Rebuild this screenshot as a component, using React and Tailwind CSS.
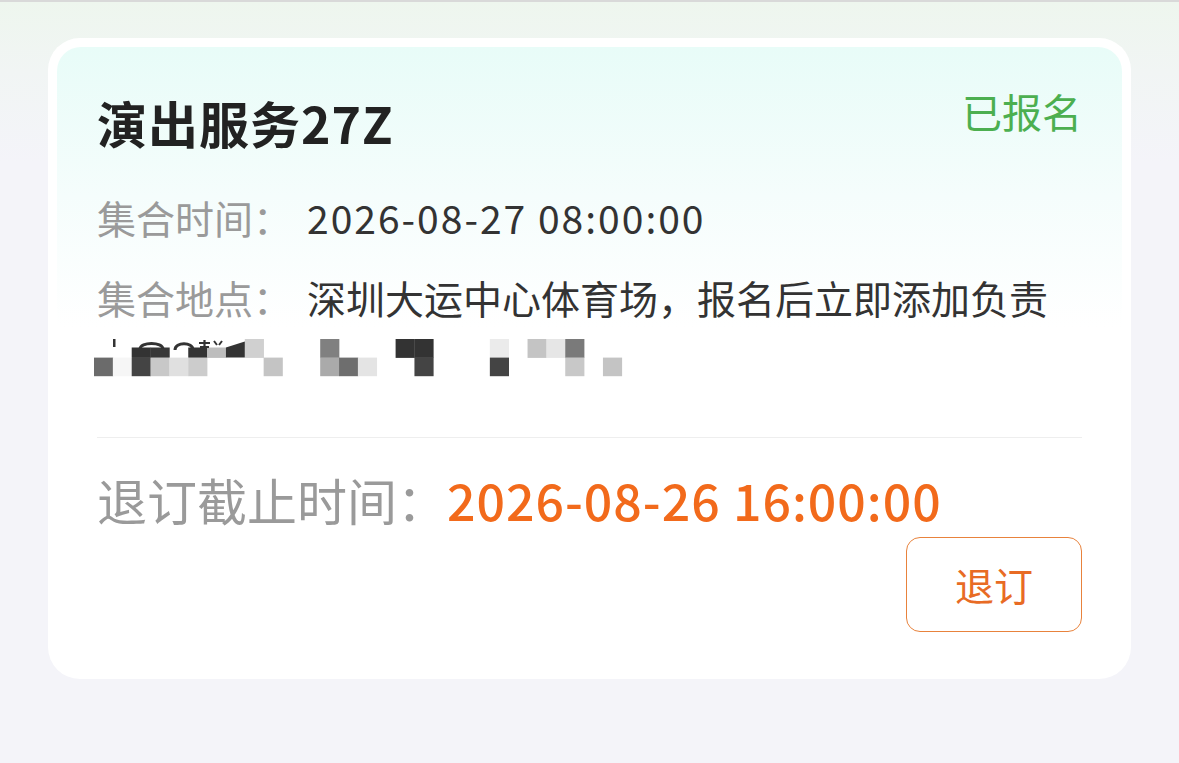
const W = 18.85;
const H = 18.6;

const row1 = [
  [2, "#333333", 8.5],
  [3, "#383838", 8.5],
  [5, "#333333", 8.5],
  [6, "#bdbdbd", 8.5],
  [8, "#d0d0d0", 0],
  [12, "#808080", 0],
  [16, "#333333", 0],
  [17, "#333333", 0],
  [21, "#ebebeb", 0],
  [23, "#c4c4c4", 0],
  [24, "#e6e6e6", 0],
  [25, "#7a7a7a", 0],
];

const row2 = [
  [0, "#6b6b6b"],
  [1, "#f6f6f6"],
  [2, "#444444"],
  [3, "#c8c8c8"],
  [4, "#e0e0e0"],
  [5, "#cccccc"],
  [9, "#c4c4c4"],
  [12, "#aaaaaa"],
  [13, "#6e6e6e"],
  [14, "#e4e4e4"],
  [17, "#444444"],
  [21, "#444444"],
  [25, "#c8c8c8"],
  [27, "#c4c4c4"],
];

function Mosaic() {
  return (
    <svg width="540" height="38" viewBox="0 0 540 38" className="block">
      {row1.map(([n, c, y0]) => (
        <rect key={"a" + n} x={n * W} y={y0} width={W + 0.3} height={H - y0 + 0.3} fill={c} />
      ))}
      <polygon points={`${7 * W},8.5 ${8 * W},2.5 ${8 * W},${H} ${7 * W},${H}`} fill="#333333" />
      {row2.map(([n, c]) => (
        <rect key={"b" + n} x={n * W} y={H} width={W + 0.3} height={H} fill={c} />
      ))}
      <rect x="19" y="0" width="2.5" height="8" fill="#333333" />
      <path d="M46 10 C46 2.5 69 2.5 69 10" stroke="#333333" strokeWidth="3" fill="none" />
      <path d="M81 11 C81 2.5 99 2.5 99 11" stroke="#333333" strokeWidth="3" fill="none" />
      <path d="M105 4 H116 M110.5 1 V9 M106 8 H115" stroke="#333333" strokeWidth="2.2" fill="none" />
      <path d="M120 2 L123 6 M128 2 L125 6" stroke="#333333" strokeWidth="2" fill="none" />
    </svg>
  );
}

export default function App() {
  return (
    <div
      className="min-h-[763px] w-full border-t-2 border-[#d9d9d9] bg-[linear-gradient(180deg,#eef6ee_0px,#f1f5f4_70px,#f4f4f9_160px)] px-[48px] pt-[36px]"
      style={{ fontFamily: '"Noto Sans CJK SC", "Noto Sans", sans-serif' }}
    >
      <div className="rounded-[32px] bg-white p-[9px]">
        <div className="rounded-[24px] bg-[linear-gradient(180deg,#e8fcf8_0%,#f5fdfc_24%,#ffffff_45%)] px-[40px] pb-[38px] pt-[40px]">
          <div className="flex h-[70px] items-start justify-between">
            <div className="text-[50px] font-bold leading-[70px] tracking-[1px] text-[#222222]">演出服务27Z</div>
            <div className="text-[40px] leading-[48px] text-[#4caf50]">已报名</div>
          </div>

          <div className="mt-[31px] text-[39px] leading-[58px]">
            <span className="inline-block w-[210px] text-[#9a9a9a]">集合时间：</span>
            <span className="tracking-[2px] text-[#333333]">2026-08-27 08:00:00</span>
          </div>

          <div className="mt-[22px] text-[39px] leading-[58px]">
            <div>
              <span className="inline-block w-[210px] text-[#9a9a9a]">集合地点：</span>
              <span className="text-[#333333]">深圳大运中心体育场，报名后立即添加负责</span>
            </div>
            <div className="ml-[-3px] h-[58px] pt-[13px]">
              <Mosaic />
            </div>
          </div>

          <div className="mt-[53px] h-px bg-[#eeeeee]" />

          <div className="mt-[31px] flex text-[50px] leading-[60px]">
            <span className="text-[#9a9a9a]">退订截止时间：</span>
            <span className="font-medium tracking-[1px] text-[#f26a1b]">2026-08-26 16:00:00</span>
          </div>

          <div className="mt-[8px] flex justify-end">
            <button className="flex h-[95px] w-[176px] items-center justify-center rounded-[14px] border border-[#e8823c] bg-white text-[39px] text-[#e86b24]">
              退订
            </button>
          </div>
        </div>
      </div>
    </div>
  );
}
